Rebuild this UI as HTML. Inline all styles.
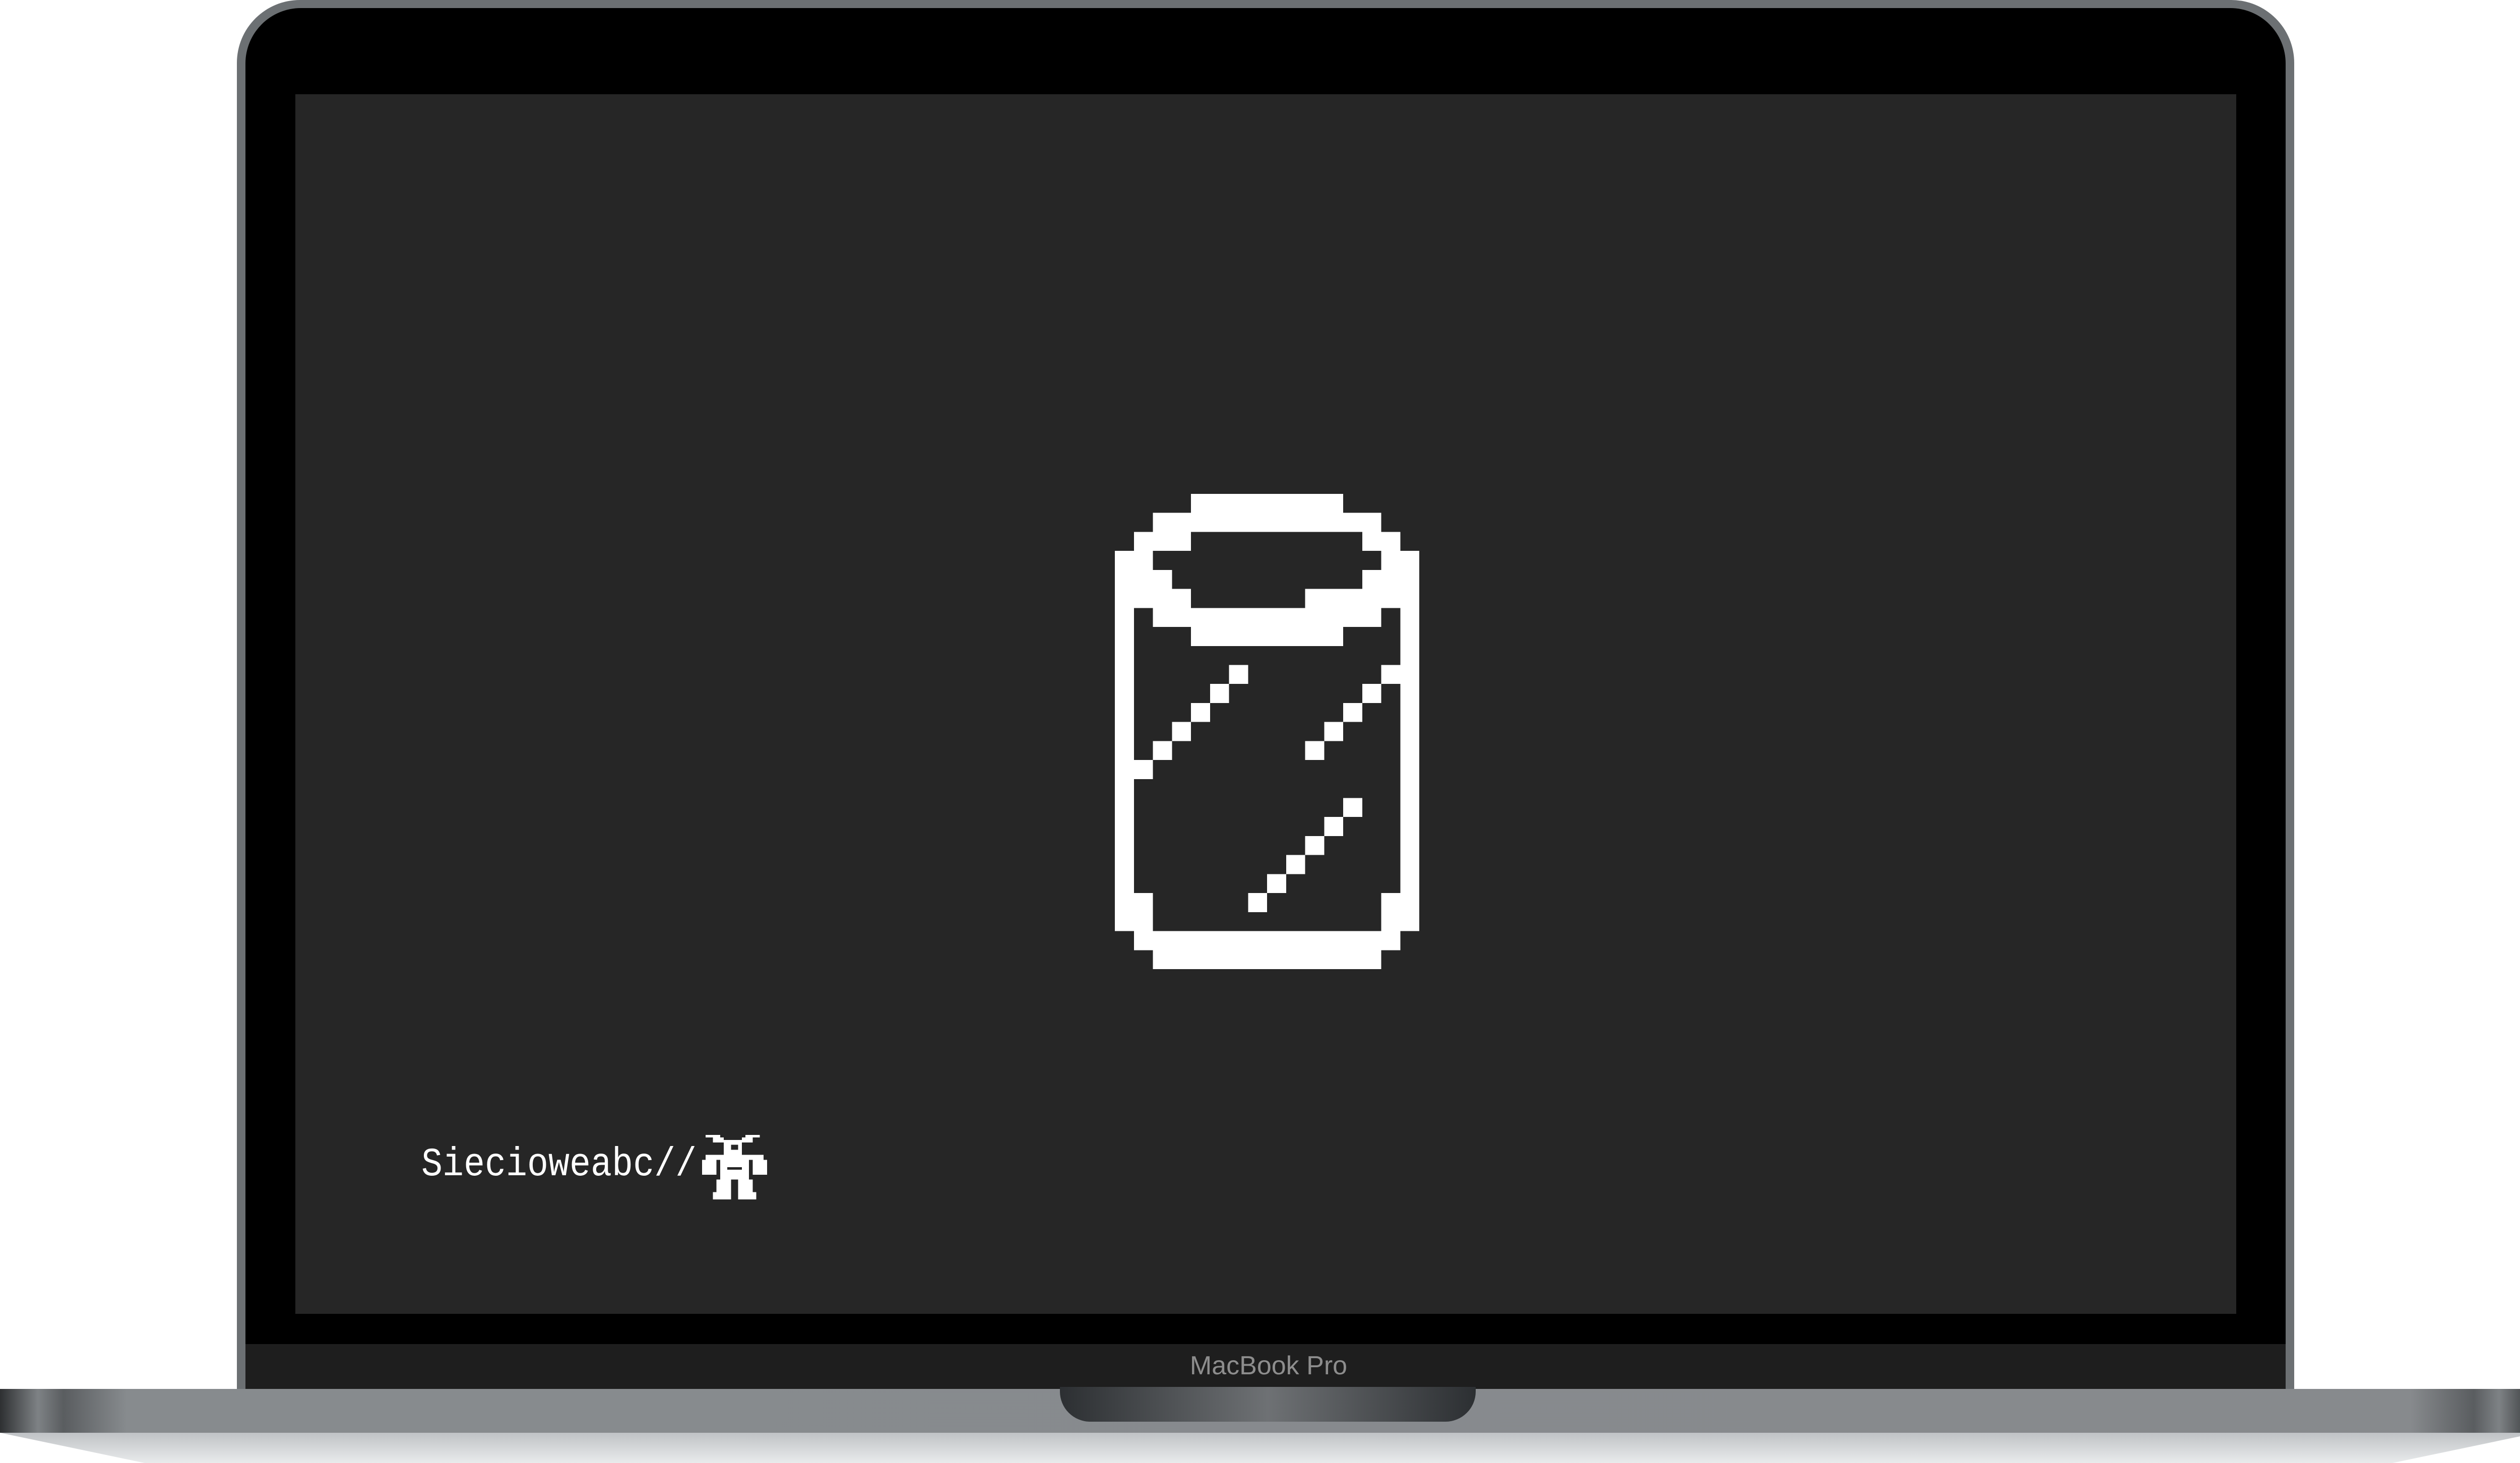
<!DOCTYPE html>
<html><head><meta charset="utf-8"><style>
html,body{margin:0;padding:0;background:#fff;}
body{width:5034px;height:2903px;position:relative;overflow:hidden;}
.lid{position:absolute;left:470px;top:0;width:4082px;height:2790px;background:#6c7073;border-radius:125px 125px 0 0;}
.lidin{position:absolute;left:487px;top:16px;width:4048px;height:2780px;background:#000;border-radius:110px 110px 0 0;}
.chin{position:absolute;left:487px;top:2667px;width:4048px;height:100px;background:#1e1e1e;}
.screen{position:absolute;left:586px;top:187px;width:3851px;height:2420px;background:#262626;}
.brand{position:absolute;left:0;width:5034px;top:2680px;text-align:center;font:52px "Liberation Sans",sans-serif;color:#8d8d8d;}
.base{position:absolute;left:0;top:2756px;width:5034px;height:87px;background:linear-gradient(90deg,#2e3032 0%,#7e8285 1.5%,#5a5d60 2.5%,#878b8e 5%,#878a8d 95%,#5a5d60 97.5%,#7e8285 98.5%,#2e3032 100%);}
.notch{position:absolute;left:2103px;top:2752px;width:825px;height:69px;background:linear-gradient(90deg,#2c2f32,#6e7174 50%,#2c2f32);border-radius:0 0 60px 60px;}
.foot{position:absolute;left:0;top:2843px;width:5034px;height:60px;background:linear-gradient(#bfc2c5,#e9ebec);clip-path:polygon(0 0,100% 0,94.3% 100%,5.7% 100%);}
.txt{position:absolute;left:836px;top:2272px;font:80px/80px "Liberation Mono",monospace;color:#fff;transform:scaleX(0.875);transform-origin:0 0;white-space:nowrap;}
</style></head><body>
<div class="lid"></div><div class="lidin"></div>
<div class="screen"></div>
<div class="chin"></div>
<div class="brand">MacBook Pro</div>
<div class="base"></div>
<div class="notch"></div>
<div class="foot"></div>
<svg style="position:absolute;left:2212px;top:980px" width="604" height="943" viewBox="0 0 16 25" preserveAspectRatio="none" shape-rendering="crispEdges">
<g fill="#fff">
<rect x="4" y="0" width="8" height="1"/>
<rect x="2" y="1" width="12" height="1"/>
<rect x="1" y="2" width="3" height="1"/><rect x="13" y="2" width="2" height="1"/>
<rect x="0" y="3" width="1" height="4"/><rect x="1" y="3" width="1" height="3"/>
<rect x="15" y="3" width="1" height="4"/><rect x="14" y="3" width="1" height="3"/>
<rect x="2" y="4" width="1" height="1"/><rect x="13" y="4" width="1" height="1"/>
<rect x="2" y="5" width="2" height="2"/><rect x="10" y="5" width="4" height="1"/>
<rect x="4" y="6" width="10" height="1"/>
<rect x="4" y="7" width="8" height="1"/>
<rect x="0" y="7" width="1" height="16"/><rect x="15" y="7" width="1" height="16"/>
<rect x="6" y="9" width="1" height="1"/><rect x="5" y="10" width="1" height="1"/><rect x="4" y="11" width="1" height="1"/><rect x="3" y="12" width="1" height="1"/><rect x="2" y="13" width="1" height="1"/><rect x="1" y="14" width="1" height="1"/>
<rect x="14" y="9" width="1" height="1"/><rect x="13" y="10" width="1" height="1"/><rect x="12" y="11" width="1" height="1"/><rect x="11" y="12" width="1" height="1"/><rect x="10" y="13" width="1" height="1"/>
<rect x="12" y="16" width="1" height="1"/><rect x="11" y="17" width="1" height="1"/><rect x="10" y="18" width="1" height="1"/><rect x="9" y="19" width="1" height="1"/><rect x="8" y="20" width="1" height="1"/><rect x="7" y="21" width="1" height="1"/>
<rect x="1" y="21" width="1" height="2"/><rect x="14" y="21" width="1" height="2"/>
<rect x="1" y="23" width="14" height="1"/>
<rect x="2" y="24" width="12" height="1"/>
</g></svg>
<div class="txt">Siecioweabc//</div>
<svg style="position:absolute;left:1393px;top:2252px" width="129" height="133" viewBox="0 0 18 27" preserveAspectRatio="none" shape-rendering="crispEdges">
<g fill="#fff">
<rect x="1" y="0" width="4" height="1"/><rect x="12" y="0" width="4" height="1"/>
<rect x="3" y="1" width="3" height="2"/><rect x="11" y="1" width="3" height="2"/>
<rect x="6" y="2" width="5" height="6"/>
<rect x="1" y="8" width="16" height="2"/>
<rect x="0" y="10" width="4" height="6"/><rect x="14" y="10" width="4" height="6"/>
<rect x="5" y="10" width="8" height="8"/>
<rect x="4" y="18" width="4" height="5"/><rect x="10" y="18" width="4" height="5"/>
<rect x="3" y="23" width="5" height="3"/><rect x="10" y="23" width="5" height="3"/>
</g>
<g fill="#262626"><rect x="8" y="4" width="2" height="2"/><rect x="7" y="13" width="4" height="1"/></g>
</svg>
</body></html>
